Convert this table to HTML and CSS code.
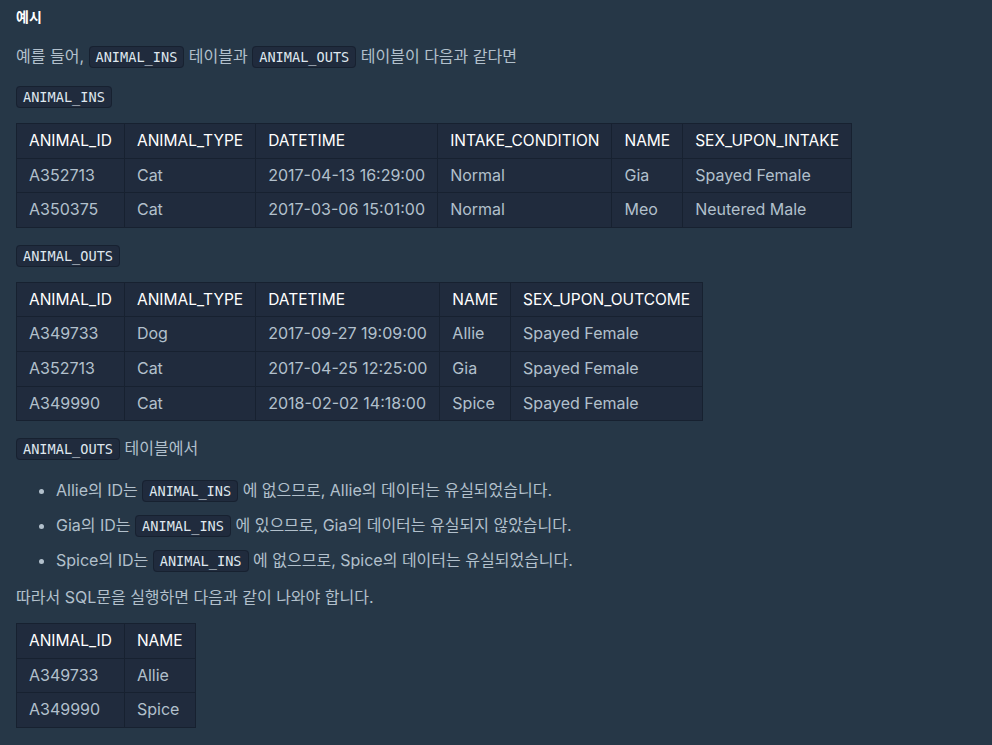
FILE: index.html
```html
<!DOCTYPE html>
<html lang="ko">
<head>
  <meta charset="UTF-8" />
  <title>예시</title>
  <link rel="stylesheet" href="styles.css">
</head>
<body>
  <h5>예시</h5>
  <p>예를 들어, <code>ANIMAL_INS</code> 테이블과 <code>ANIMAL_OUTS</code> 테이블이 다음과 같다면</p>

  <p><code>ANIMAL_INS</code></p>
  <table>
    <tr><th>ANIMAL_ID</th><th>ANIMAL_TYPE</th><th>DATETIME</th><th>INTAKE_CONDITION</th><th>NAME</th><th>SEX_UPON_INTAKE</th></tr>
    <tr><td>A352713</td><td>Cat</td><td>2017-04-13 16:29:00</td><td>Normal</td><td>Gia</td><td>Spayed Female</td></tr>
    <tr><td>A350375</td><td>Cat</td><td>2017-03-06 15:01:00</td><td>Normal</td><td>Meo</td><td>Neutered Male</td></tr>
  </table>

  <p><code>ANIMAL_OUTS</code></p>
  <table>
    <tr><th>ANIMAL_ID</th><th>ANIMAL_TYPE</th><th>DATETIME</th><th>NAME</th><th>SEX_UPON_OUTCOME</th></tr>
    <tr><td>A349733</td><td>Dog</td><td>2017-09-27 19:09:00</td><td>Allie</td><td>Spayed Female</td></tr>
    <tr><td>A352713</td><td>Cat</td><td>2017-04-25 12:25:00</td><td>Gia</td><td>Spayed Female</td></tr>
    <tr><td>A349990</td><td>Cat</td><td>2018-02-02 14:18:00</td><td>Spice</td><td>Spayed Female</td></tr>
  </table>

  <p><code>ANIMAL_OUTS</code> 테이블에서</p>
  <ul>
    <li>Allie의 ID는 <code>ANIMAL_INS</code> 에 없으므로, Allie의 데이터는 유실되었습니다.</li>
    <li>Gia의 ID는 <code>ANIMAL_INS</code> 에 있으므로, Gia의 데이터는 유실되지 않았습니다.</li>
    <li>Spice의 ID는 <code>ANIMAL_INS</code> 에 없으므로, Spice의 데이터는 유실되었습니다.</li>
  </ul>

  <p>따라서 SQL문을 실행하면 다음과 같이 나와야 합니다.</p>
  <table>
    <tr><th>ANIMAL_ID</th><th>NAME</th></tr>
    <tr><td>A349733</td><td>Allie</td></tr>
    <tr><td>A349990</td><td>Spice</td></tr>
  </table>
</body>
</html>
```

FILE: styles.css
```css
body {
  margin: 0;
  padding: 6px 16px;
  background: #263747;
  color: #b2c0cc;
  font-family: Inter, "Noto Sans CJK KR", sans-serif;
  font-size: 16px;
  line-height: 26px;
}
h5 {
  margin: 0 0 15px;
  font-size: 14px;
  line-height: 22px;
  font-weight: 700;
  color: #fff;
}
p {
  margin: 0 0 13px;
}
code {
  font-family: "DejaVu Sans Mono", monospace;
  font-size: 13.6px;
  color: #dfe7ee;
  background: #202b3d;
  border: 1px solid #172130;
  border-radius: 4px;
  padding: 2px 6px;
}
table {
  border-collapse: collapse;
  background: #202b3d;
  margin: 0 0 14px;
  font-size: 16px;
}
th, td {
  border: 1px solid #172130;
  padding: 6px 12px;
  text-align: left;
  line-height: 21.6px;
}
th {
  color: #fff;
  font-size: 15.5px;
  font-weight: 400;
}
td {
  color: #b2c0cc;
}
ul {
  margin: 0 0 10px;
  padding: 2px 0 0 40px;
}
li + li {
  margin-top: 8px;
}
```
